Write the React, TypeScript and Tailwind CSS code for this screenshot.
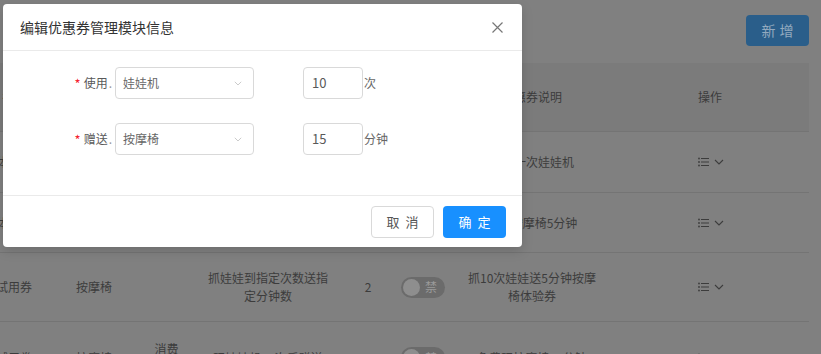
import React from "react"

const font = { fontFamily: '"Noto Sans CJK SC", "Liberation Sans", sans-serif' }

function BarsIcon() {
  return (
    <svg width="11" height="10" viewBox="0 0 11 10" fill="none">
      <circle cx="1" cy="1.5" r="0.9" fill="#3c3c3c" />
      <circle cx="1" cy="5" r="0.9" fill="#3c3c3c" />
      <circle cx="1" cy="8.5" r="0.9" fill="#3c3c3c" />
      <path d="M3 1.5H11M3 5H11M3 8.5H11" stroke="#3c3c3c" strokeWidth="1" />
    </svg>
  )
}

function Chevron({ color = "#3c3c3c", w = 10 }: { color?: string; w?: number }) {
  return (
    <svg width={w} height={w * 0.6} viewBox="0 0 10 6" fill="none">
      <path d="M1 1L5 5L9 1" stroke={color} strokeWidth="1.1" />
    </svg>
  )
}

function Actions() {
  return (
    <div className="flex items-center gap-[5px]">
      <BarsIcon />
      <Chevron />
    </div>
  )
}

function Toggle() {
  return (
    <div className="w-[44px] h-[21px] rounded-full bg-[#6b6b6b] flex items-center px-[2px] justify-between">
      <div className="w-[17px] h-[17px] rounded-full bg-[#8e8e8e]" />
      <span className="text-[12px] text-[#9a9a9a] pr-[6px]">禁</span>
    </div>
  )
}

const cols = "grid grid-cols-[80px_80px_65px_138px_62px_48px_170px_192px]"

type Row = { h: string; name: string; type: string; cond: string; rule: string; n: string; desc: string }

const rows: Row[] = [
  { h: "h-[61px]", name: "体验券", type: "娃娃机", cond: "消费", rule: "消费满10元赠送", n: "1", desc: "赠送一次娃娃机" },
  { h: "h-[60px]", name: "体验券", type: "按摩椅", cond: "消费", rule: "消费满20元赠送", n: "1", desc: "赠送按摩椅5分钟" },
  { h: "h-[69px]", name: "试用券", type: "按摩椅", cond: "", rule: "抓娃娃到指定次数送指定分钟数", n: "2", desc: "抓10次娃娃送5分钟按摩椅体验券" },
  { h: "h-[72px]", name: "试用券", type: "按摩椅", cond: "消费赠送", rule: "玩娃娃机10次后赠送", n: "3", desc: "免费玩按摩椅15分钟" },
]

function Field({ label, value, num, unit }: { label: string; value: string; num: string; unit: string }) {
  return (
    <div className="flex items-center h-[32px]">
      <div className="w-[109px] flex items-center justify-end text-[12px] text-[#595959]">
        <span className="text-[#f5222d] mr-[3px] text-[13px] leading-none">*</span>
        <span>{label}</span>
        <span className="text-[#999] ml-[1px]">.</span>
      </div>
      <div className="ml-[3px] w-[139px] h-[32px] border border-[#d9d9d9] rounded-[4px] flex items-center justify-between pl-[7px] pr-[11px] text-[12px] text-[#666]">
        <span>{value}</span>
        <Chevron color="#c4c4c4" w={8} />
      </div>
      <div className="ml-[49px] w-[60px] h-[32px] border border-[#d9d9d9] rounded-[4px] flex items-center pl-[8px] text-[13px] text-[#595959]">
        {num}
      </div>
      <span className="ml-[1px] text-[12px] text-[#666]">{unit}</span>
    </div>
  )
}

export default function App() {
  return (
    <div className="relative w-[821px] h-[354px] overflow-hidden bg-[#808080] text-[#3c3c3c]" style={font}>
      {/* page behind the mask */}
      <div className="flex flex-col">
        <div className="flex justify-end pt-[15px] pr-[12px]">
          <div className="w-[63px] h-[31px] rounded-[4px] bg-[#2a5e8a] flex items-center justify-center text-[14px] text-[#93aabf] tracking-[4px] pl-[4px]">
            新增
          </div>
        </div>
        <div className="mt-[17px] ml-[-26px] w-[835px] text-[12px]">
          <div className={`${cols} h-[68px] bg-[#7b7b7b] items-center text-center`}>
            <div>名称</div>
            <div>类型</div>
            <div>条件</div>
            <div>规则</div>
            <div>数量</div>
            <div>状态</div>
            <div>优惠券说明</div>
            <div className="text-left pl-[81px]">操作</div>
          </div>
          {rows.map((r, i) => (
            <div key={i} className={`${cols} ${r.h} items-center text-center border-t border-[#747474] leading-[18px]`}>
              <div>{r.name}</div>
              <div>{r.type}</div>
              <div className="px-[18px]">{r.cond}</div>
              <div className="px-[8px]">{r.rule}</div>
              <div>{r.n}</div>
              <div className="flex justify-center">
                <Toggle />
              </div>
              <div className="px-[20px]">{r.desc}</div>
              <div className="pl-[81px]">
                <Actions />
              </div>
            </div>
          ))}
        </div>
      </div>

      {/* modal */}
      <div className="absolute left-[3px] top-[4px] w-[519px] h-[243px] bg-white rounded-[4px] shadow-[0_4px_12px_rgba(0,0,0,0.15)] flex flex-col">
        <div className="h-[47px] flex items-center justify-between pl-[17px] pr-[19px] border-b border-[#eaeaea]">
          <span className="text-[14px] text-[#333]">编辑优惠券管理模块信息</span>
          <svg width="11" height="11" viewBox="0 0 11 11" fill="none">
            <path d="M0.5 0.5L10.5 10.5M10.5 0.5L0.5 10.5" stroke="#777" strokeWidth="1.2" />
          </svg>
        </div>
        <div className="h-[145px] pt-[16px] flex flex-col gap-[24px] border-b border-[#eaeaea]">
          <Field label="使用" value="娃娃机" num="10" unit="次" />
          <Field label="赠送" value="按摩椅" num="15" unit="分钟" />
        </div>
        <div className="flex justify-end gap-[9px] pt-[10px] pr-[16px]">
          <div className="w-[63px] h-[32px] border border-[#d9d9d9] rounded-[4px] flex items-center justify-center text-[13px] text-[#555] tracking-[6px] pl-[6px]">
            取消
          </div>
          <div className="w-[63px] h-[32px] bg-[#1890ff] rounded-[4px] flex items-center justify-center text-[13px] text-white tracking-[6px] pl-[6px]">
            确定
          </div>
        </div>
      </div>
    </div>
  )
}
